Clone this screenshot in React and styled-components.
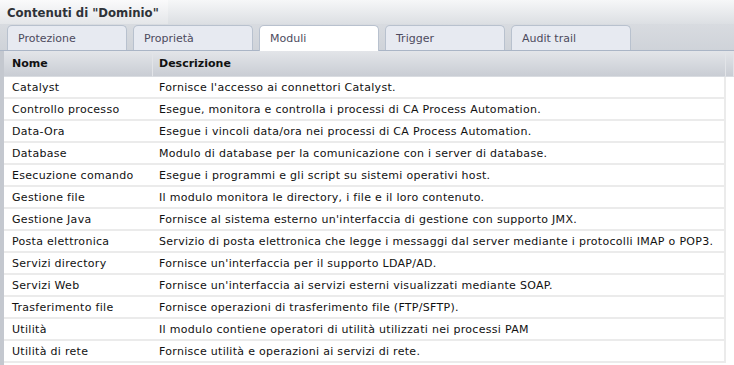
import styled, { createGlobalStyle } from "styled-components";

const Global = createGlobalStyle`
  body {
    margin: 0;
    background: #fff;
    font-family: "DejaVu Sans", sans-serif;
  }
`;

const Page = styled.div`
  width: 734px;
  height: 365px;
  overflow: hidden;
  background: #fff;
`;

const TitleBar = styled.div`
  height: 24px;
  display: flex;
  align-items: center;
  background: linear-gradient(#f6f7f8, #dcdfe3);
`;

const Title = styled.div`
  height: 100%;
  display: flex;
  align-items: center;
  padding: 0 8px 0 7px;
  width: 153px;
  background: linear-gradient(#fafafb, #e4e6e9);
  font-family: "DejaVu Sans Condensed", "DejaVu Sans", sans-serif;
  font-weight: bold;
  font-size: 13px;
  color: #2e3238;
`;

const TabBar = styled.div`
  display: flex;
  align-items: flex-end;
  gap: 6px;
  height: 26px;
  padding-left: 7px;
  background: linear-gradient(#d8dbe0, #cfd3d9);
  border-bottom: 1px solid #aab5c6;
`;

const Tab = styled.div`
  width: 108px;
  padding-left: 10px;
  display: flex;
  align-items: center;
  font-size: 11px;
  color: #4d4b5e;
  background: ${(p) => (p.$active ? "#fff" : "#e7eaf1")};
  border: 1px solid #b8c1ce;
  border-bottom: none;
  border-radius: 5px 5px 0 0;
  margin-bottom: ${(p) => (p.$active ? "-1px" : "0")};
  height: ${(p) => (p.$active ? "25px" : "24px")};
`;

const Body = styled.div`
  border-left: 4px solid #c4c8cf;
  height: 315px;
`;

const Grid = styled.div`
  display: grid;
  grid-template-columns: 149px 573px 1fr;
`;

const HeadCell = styled.div`
  height: 25px;
  display: flex;
  align-items: center;
  padding-left: ${(p) => p.$pad || "6px"};
  background: linear-gradient(#e3e5e9, #c9cdd4);
  border-right: 1px solid #e2e4e8;
  border-bottom: 1px solid #d9dce1;
  font-weight: bold;
  font-size: 11px;
  color: #111;
`;

const Cell = styled.div`
  height: 20px;
  display: flex;
  align-items: center;
  padding-left: ${(p) => p.$pad || "6px"};
  border-bottom: 2px solid #ebebeb;
  border-right: ${(p) => (p.$last ? "2px solid #ebebeb" : "none")};
  font-size: 11px;
  letter-spacing: 0.3px;
  color: #111;
  white-space: nowrap;
`;

const Empty = styled.div`
  background: #fff;
`;

const tabs = ["Protezione", "Proprietà", "Moduli", "Trigger", "Audit trail"];

const rows = [
  ["Catalyst", "Fornisce l'accesso ai connettori Catalyst."],
  ["Controllo processo", "Esegue, monitora e controlla i processi di CA Process Automation."],
  ["Data-Ora", "Esegue i vincoli data/ora nei processi di CA Process Automation."],
  ["Database", "Modulo di database per la comunicazione con i server di database."],
  ["Esecuzione comando", "Esegue i programmi e gli script su sistemi operativi host."],
  ["Gestione file", "Il modulo monitora le directory, i file e il loro contenuto."],
  ["Gestione Java", "Fornisce al sistema esterno un'interfaccia di gestione con supporto JMX."],
  ["Posta elettronica", "Servizio di posta elettronica che legge i messaggi dal server mediante i protocolli IMAP o POP3."],
  ["Servizi directory", "Fornisce un'interfaccia per il supporto LDAP/AD."],
  ["Servizi Web", "Fornisce un'interfaccia ai servizi esterni visualizzati mediante SOAP."],
  ["Trasferimento file", "Fornisce operazioni di trasferimento file (FTP/SFTP)."],
  ["Utilità", "Il modulo contiene operatori di utilità utilizzati nei processi PAM"],
  ["Utilità di rete", "Fornisce utilità e operazioni ai servizi di rete."],
];

export default function App() {
  return (
    <Page>
      <Global />
      <TitleBar>
        <Title>Contenuti di "Dominio"</Title>
      </TitleBar>
      <TabBar>
        {tabs.map((t) => (
          <Tab key={t} $active={t === "Moduli"}>
            {t}
          </Tab>
        ))}
      </TabBar>
      <Body>
        <Grid>
          <HeadCell $pad="8px">Nome</HeadCell>
          <HeadCell>Descrizione</HeadCell>
          <HeadCell />
          {rows.map(([name, desc]) => (
            <>
              <Cell key={name + "n"} $pad="8px">{name}</Cell>
              <Cell key={name + "d"} $last>{desc}</Cell>
              <Empty key={name + "e"} />
            </>
          ))}
        </Grid>
      </Body>
    </Page>
  );
}
